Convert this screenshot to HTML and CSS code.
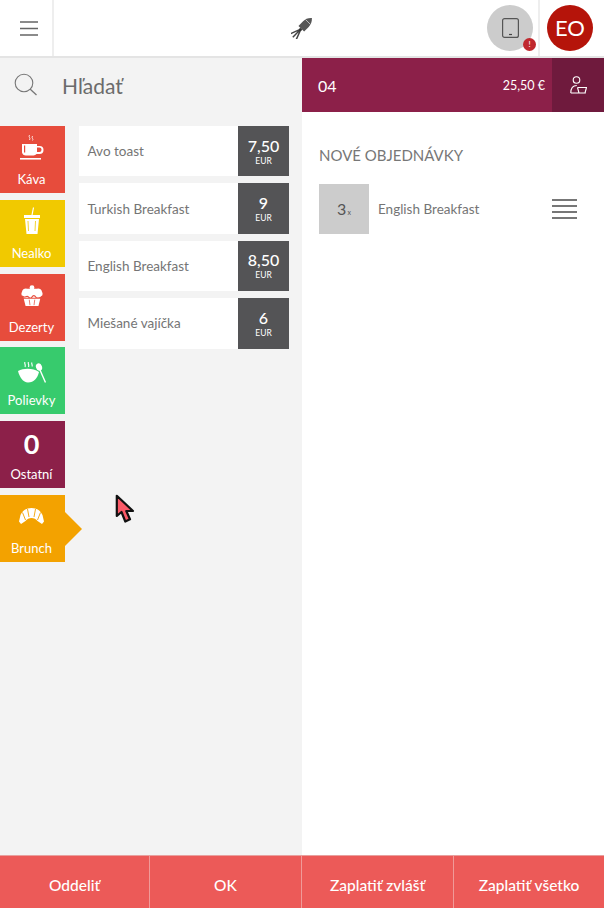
FILE: index.html
```html
<!DOCTYPE html>
<html lang="sk">
<head>
  <meta charset="UTF-8" />
  <meta name="viewport" content="width=device-width, initial-scale=1.0" />
  <title>Pokladňa</title>
  <link rel="stylesheet" href="styles.css">
</head>
<body>

  <header class="topbar">
    <div class="menu-cell">
      <svg width="18" height="15" viewBox="0 0 18 15"><path d="M0 1h18M0 7.500h18M0 14h18" stroke="#666" stroke-width="1.300" fill="none"/></svg>
    </div>
    <div class="logo-cell">
      <svg width="22" height="22" viewBox="0 0 22 22">
        <g transform="rotate(45 11 11)">
          <path d="M11-3c2.800 2.500 4 5.500 4 8.500V12H7V5.500C7 2.500 8.200-.5 11-3z" fill="#555"/>
          <path d="M7.500 2.500h7" stroke="#ccc" stroke-width=".8"/>
          <path d="M9.500 12h3v4h-3z" fill="#333"/>
          <path d="M11 15v9M10 15l-3 8M12 15l3 8" stroke="#444" stroke-width="1.500" fill="none"/>
        </g>
      </svg>
    </div>
    <div class="tablet-cell">
      <div class="tablet-btn">
        <svg width="17" height="20" viewBox="0 0 17 20"><rect x=".6" y=".6" width="15.800" height="18.800" rx="2" fill="none" stroke="#555" stroke-width="1.200"/><path d="M7 16.500h3" stroke="#444" stroke-width="1.200"/></svg>
        <span class="alert-dot">!</span>
      </div>
    </div>
    <div class="user-cell">
      <div class="avatar">EO</div>
    </div>
  </header>

  <main class="content">
    <section class="left">
      <div class="search">
        <svg width="24" height="24" viewBox="0 0 24 24"><circle cx="10" cy="10" r="8.800" fill="none" stroke="#777" stroke-width="1.100"/><path d="M16 16l6.500 6" stroke="#777" stroke-width="1.300"/></svg>
        <span class="search-text">Hľadať</span>
      </div>
      <div class="catalog">
        <div class="categories">
          <div class="cat cat-red">
            <svg width="24" height="26" viewBox="0 0 24 26">
              <path d="M9.500 0c-1.500 2 1.500 3 0 5M12.500 1c-1.500 2 1.500 3 0 4.500" stroke="#fff" stroke-width="1" fill="none" opacity=".8"/>
              <path d="M2 9h15v2h2.500a3.500 3.500 0 0 1 0 8H16.500a4 4 0 0 1-3 1.500H6a4 4 0 0 1-4-3z" fill="#fff"/>
              <path d="M17 12.500h2.300a2 2 0 0 1 0 4.500H17z" fill="#e74c3c"/>
              <path d="M4 10.500h1.200v7H4z" fill="#e74c3c"/>
              <path d="M0 23h21v1.600H0z" fill="#fff"/>
            </svg>
            <span>Káva</span>
          </div>
          <div class="cat cat-yellow">
            <svg class="icon-soda" width="16" height="28" viewBox="0 0 16 28">
              <path d="M8 8l1.500-7.500" stroke="#fff" stroke-width="1.200"/>
              <path d="M0 8h16v3H0zM1 12h14l-1.500 15h-11z" fill="#fff"/>
              <path d="M4 14l.5 10M11.500 14l-.5 10" stroke="#f1c900" stroke-width=".8"/>
            </svg>
            <span>Nealko</span>
          </div>
          <div class="cat cat-red">
            <svg class="icon-cake" width="22" height="22" viewBox="0 0 24 24">
              <circle cx="12" cy="3" r="2.600" fill="#fff"/>
              <path d="M4 14a4.500 4.500 0 0 1-3-6.500A5 5 0 0 1 6.500 4h11A5 5 0 0 1 23 7.500 4.500 4.500 0 0 1 20 14z" fill="#fff"/>
              <path d="M1 12c3 3 5-1 7 1s3 2 4 0 3-2 4 0 5 2 7-1" stroke="#e74c3c" stroke-width="1.300" fill="none"/>
              <path d="M3 15h18l-2 8H5z" fill="#fff"/>
              <path d="M9 16l.8 6M15 16l-.8 6" stroke="#e74c3c" stroke-width=".8"/>
            </svg>
            <span>Dezerty</span>
          </div>
          <div class="cat cat-green">
            <svg class="icon-soup" width="28" height="21" viewBox="0 0 28 21">
              <path d="M7 0c-1 1.500 1 2.500 0 5M10.500 0c-1 1.500 1 2.500 0 5M14 .5c-1 1.500 .8 2 0 4" stroke="#fff" stroke-width="1.100" fill="none"/>
              <path d="M0 9c6-3 15-3 21 1-1.500 6-5 10.500-11 10.500C5 20.500 1.500 15 0 9z" fill="#fff"/>
              <ellipse cx="21" cy="5" rx="3" ry="3.800" fill="#fff" transform="rotate(-20 21 5)"/>
              <path d="M22 8l5.500 12.500" stroke="#fff" stroke-width="1.400"/>
            </svg>
            <span>Polievky</span>
          </div>
          <div class="cat cat-wine">
            <div class="cat-letter">0</div>
            <span>Ostatní</span>
          </div>
          <div class="cat cat-orange">
            <svg class="icon-croissant" width="25" height="16" viewBox="0 0 25 16">
              <path d="M12.500 0C7.500 0 3.500 2.500 1.500 7L0 13.500l2 2.500 4.500-3c1.500-2 3.500-3 6-3s4.500 1 6 3l4.500 3 2-2.500L23.500 7c-2-4.500-6-7-11-7z" fill="#fff"/>
              <path d="M8.500 1l1.500 8M16.500 1l-1.500 8M3.500 4.500l3 7.500M21.500 4.500l-3 7.500" stroke="#f3a200" stroke-width=".9"/>
            </svg>
            <span>Brunch</span>
          </div>
        </div>
        <div class="items">
          <div class="item">
            <div class="item-name">Avo toast</div>
            <div class="price"><b>7,50</b><small>EUR</small></div>
          </div>
          <div class="item">
            <div class="item-name">Turkish Breakfast</div>
            <div class="price"><b>9</b><small>EUR</small></div>
          </div>
          <div class="item">
            <div class="item-name">English Breakfast</div>
            <div class="price"><b>8,50</b><small>EUR</small></div>
          </div>
          <div class="item">
            <div class="item-name">Miešané vajíčka</div>
            <div class="price"><b>6</b><small>EUR</small></div>
          </div>
        </div>
      </div>
    </section>

    <section class="right">
      <div class="table-bar">
        <span class="table-no">04</span>
        <span class="table-sum">25,50 €</span>
        <div class="table-user">
          <svg width="17" height="18" viewBox="0 0 17 18" fill="none" stroke="#fff" stroke-width="1.100">
            <circle cx="6.500" cy="4" r="3.300"/>
            <path d="M.8 17c0-5 2-7.500 6-7.500"/>
            <path d="M.8 17h15M7.500 11.500h9l-1.500 5.500M7.500 11.500l1.500 5.500"/>
          </svg>
        </div>
      </div>
      <div class="orders">
        <h2 class="orders-title">NOVÉ OBJEDNÁVKY</h2>
        <div class="order">
          <div class="qty">3<small>x</small></div>
          <div class="order-name">English Breakfast</div>
          <div class="order-menu"><i></i><i></i><i></i><i></i></div>
        </div>
      </div>
    </section>
  </main>

  <footer class="actions">
    <button class="btn-side">Oddeliť</button>
    <button class="btn-mid">OK</button>
    <button class="btn-mid">Zaplatiť zvlášť</button>
    <button class="btn-side">Zaplatiť všetko</button>
  </footer>

  <svg class="cursor" width="20" height="31" viewBox="0 0 20 31">
    <path d="M1.800 1.800V22l4.700-4 3.800 9.500 4.700-2.200-3.700-8.300h6.700z" fill="#fb5a68" stroke="#111" stroke-width="2.200" stroke-linejoin="round"/>
  </svg>

</body>
</html>
```

FILE: styles.css
```css
* {
  box-sizing: border-box;
}
body {
  margin: 0;
  height: 908px;
  overflow: hidden;
  position: relative;
  display: flex;
  flex-direction: column;
  background: #fff;
  color: #666;
  font-family: "Lato", "Liberation Sans", sans-serif;
}
.topbar {
  display: flex;
  height: 58px;
  border-bottom: 2px solid #e4e4e4;
  background: #fff;
}
.menu-cell {
  width: 54px;
  display: flex;
  align-items: center;
  justify-content: flex-start;
  padding-left: 20px;
  border-right: 2px solid #eee;
}
.logo-cell {
  width: 432px;
  display: flex;
  align-items: center;
  justify-content: center;
  padding-left: 64px;
  padding-bottom: 1px;
}
.tablet-cell {
  width: 54px;
  border-right: 2px solid #eee;
  padding: 5px 0 0 1px;
}
.tablet-btn {
  position: relative;
  width: 46px;
  height: 46px;
  border-radius: 50%;
  background: #ccc;
  display: flex;
  align-items: center;
  justify-content: center;
}
.alert-dot {
  position: absolute;
  right: -3px;
  bottom: 0;
  width: 13px;
  height: 13px;
  border-radius: 50%;
  background: #c0272d;
  color: #fff;
  font-size: 8px;
  line-height: 13px;
  text-align: center;
}
.user-cell {
  flex: 1;
  padding: 5px 0 0 7px;
}
.avatar {
  width: 46px;
  height: 46px;
  border-radius: 50%;
  background: #b5140a;
  color: #fff;
  font-size: 22px;
  line-height: 46px;
  text-align: center;
}
.content {
  flex: 1;
  display: flex;
  min-height: 0;
}
.left {
  width: 302px;
  background: #f3f3f3;
}
.search {
  height: 54px;
  display: flex;
  align-items: center;
  gap: 15px;
  padding-left: 14px;
}
.search-text {
  font-size: 21px;
  color: #6b6b6b;
  padding-left: 9px;
}
.catalog {
  display: flex;
  padding-top: 14px;
}
.categories {
  width: 65px;
  margin-right: 14px;
  display: flex;
  flex-direction: column;
  gap: 6.800px;
}
.cat {
  position: relative;
  height: 67px;
  display: flex;
  flex-direction: column;
  align-items: center;
  justify-content: space-between;
  padding: 9px 2px 6px 0;
  color: #fff;
  font-size: 13px;
}
.icon-soda {
  margin-top: -2px;
}
.icon-cake {
  margin-top: 2px;
}
.icon-soup {
  margin-top: 6px;
}
.icon-croissant {
  margin-top: 4px;
}
.cat-red {
  background: #e74c3c;
}
.cat-yellow {
  background: #f1c900;
}
.cat-green {
  background: #37cb6d;
}
.cat-wine {
  background: #8c2049;
}
.cat-orange {
  background: #f3a200;
}
.cat-orange::after {
  content: "";
  position: absolute;
  left: 65px;
  top: 17px;
  border-left: 17px solid #f3a200;
  border-top: 17px solid transparent;
  border-bottom: 17px solid transparent;
}
.cat-letter {
  font-size: 27px;
  font-weight: 700;
  line-height: 27px;
}
.items {
  width: 210px;
  display: flex;
  flex-direction: column;
  gap: 7px;
}
.item {
  height: 50.400px;
  display: flex;
  align-items: center;
  justify-content: space-between;
  background: #fff;
  padding-left: 8.500px;
}
.item-name {
  font-size: 13.500px;
  color: #757575;
}
.price {
  width: 51px;
  height: 100%;
  background: #545456;
  color: #fff;
  display: flex;
  flex-direction: column;
  align-items: center;
  justify-content: center;
}
.price b {
  font-size: 16px;
  font-weight: 500;
  line-height: 20px;
}
.price small {
  font-size: 8.500px;
  line-height: 11px;
}
.right {
  flex: 1;
}
.table-bar {
  height: 54px;
  display: flex;
  align-items: center;
  background: #8c2049;
  color: #fff;
  padding-left: 16px;
}
.table-no {
  font-size: 16px;
  flex: 1;
}
.table-sum {
  font-size: 12.500px;
  margin-right: 7px;
}
.table-user {
  width: 52px;
  height: 100%;
  background: #6f1a3d;
  display: flex;
  align-items: center;
  justify-content: center;
}
.orders {
  padding: 34px 27px 0 17px;
}
.orders-title {
  margin: 0 0 20px;
  font-size: 15px;
  line-height: 18px;
  font-weight: 400;
  color: #777;
}
.order {
  display: flex;
  align-items: center;
  height: 50px;
}
.qty {
  width: 50px;
  height: 50px;
  background: #ccc;
  color: #555;
  font-size: 16px;
  line-height: 50px;
  text-align: center;
}
.qty small {
  font-size: 7px;
  margin-left: 1px;
}
.order-name {
  flex: 1;
  margin-left: 9px;
  font-size: 13.500px;
  color: #757575;
}
.order-menu {
  width: 25px;
  display: flex;
  flex-direction: column;
  gap: 4.800px;
}
.order-menu i {
  height: 1.200px;
  background: #777;
}
.actions {
  height: 53px;
  display: flex;
  background: #ec5a58;
  border-top: 1px solid #e8a09e;
}
.actions button {
  border: none;
  border-right: 1px solid #f09a98;
  background: transparent;
  color: #fff;
  font-family: inherit;
  font-size: 15.500px;
  font-weight: 500;
  padding: 6px 0 0;
}
.btn-side {
  width: 150px;
}
.btn-mid {
  width: 152px;
}
.actions button:last-child {
  border-right: none;
}
.cursor {
  position: absolute;
  left: 115px;
  top: 494px;
}
```
